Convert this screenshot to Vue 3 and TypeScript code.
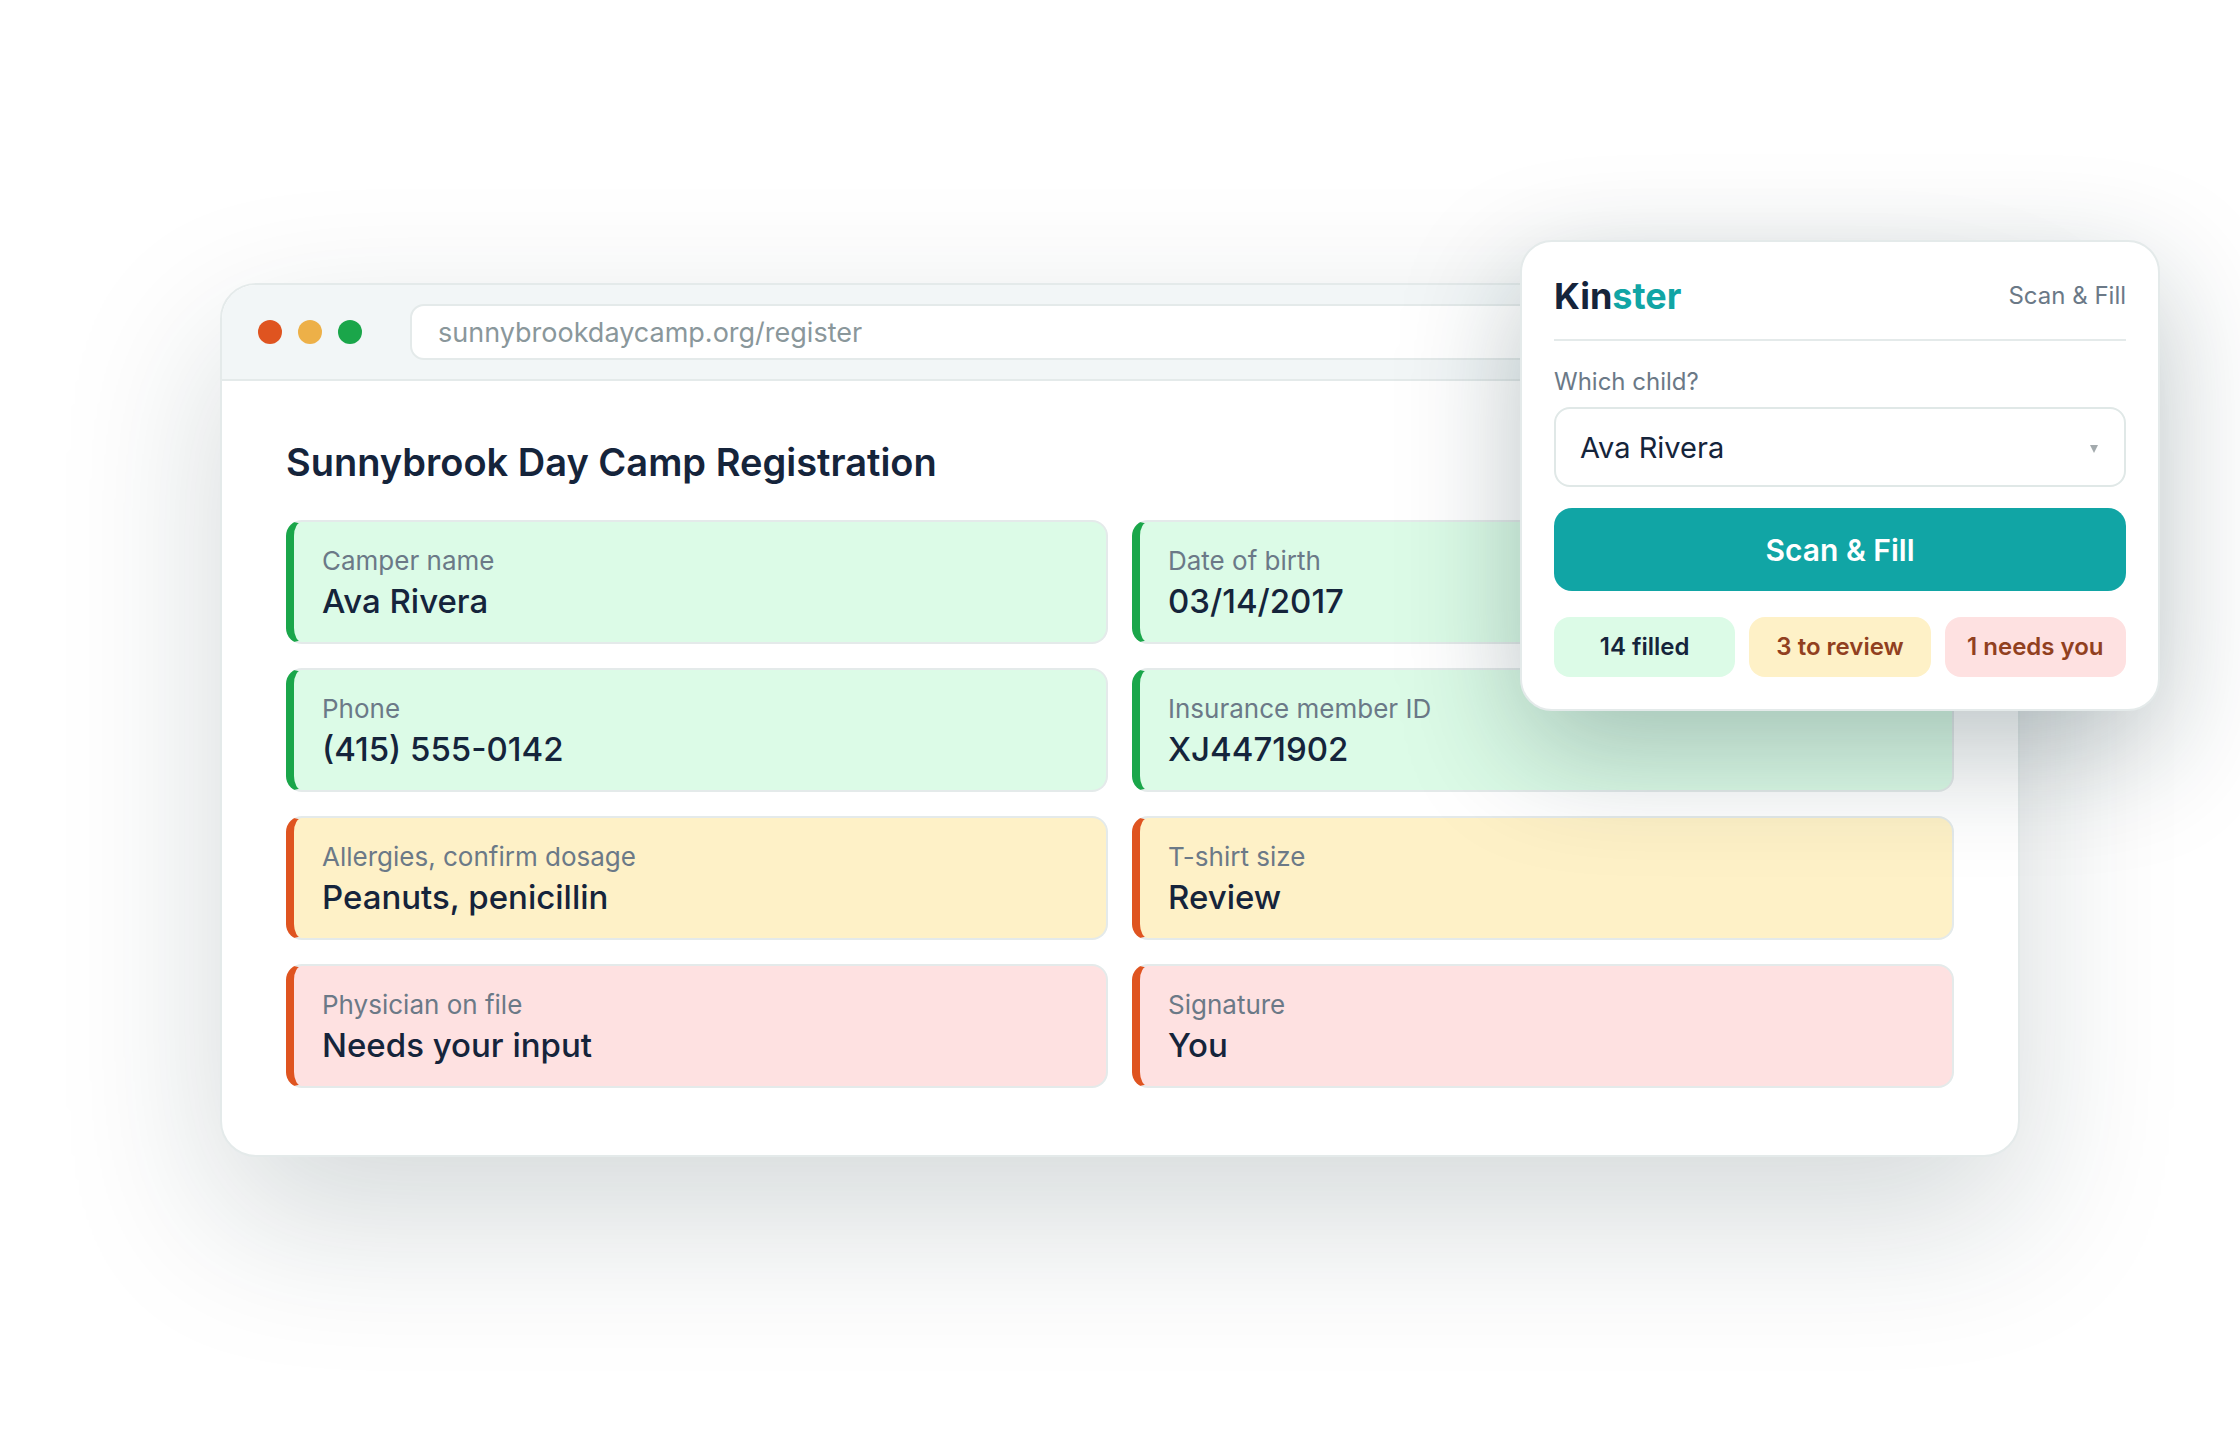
<script setup lang="ts">
import { ref } from 'vue'

type Status = 'filled' | 'review' | 'needed'

interface Field {
  id: string
  label: string
  value: string
  status: Status
}

const url = ref('sunnybrookdaycamp.org/register')
const child = ref('Ava Rivera')
const children: string[] = ['Ava Rivera']

const fields = ref<Field[]>([
  { id: 'camper', label: 'Camper name', value: 'Ava Rivera', status: 'filled' },
  { id: 'dob', label: 'Date of birth', value: '03/14/2017', status: 'filled' },
  { id: 'phone', label: 'Phone', value: '(415) 555-0142', status: 'filled' },
  { id: 'insurance', label: 'Insurance member ID', value: 'XJ4471902', status: 'filled' },
  { id: 'allergies', label: 'Allergies, confirm dosage', value: 'Peanuts, penicillin', status: 'review' },
  { id: 'shirt', label: 'T-shirt size', value: 'Review', status: 'review' },
  { id: 'physician', label: 'Physician on file', value: 'Needs your input', status: 'needed' },
  { id: 'signature', label: 'Signature', value: 'You', status: 'needed' },
])

const totals: { text: string; status: Status }[] = [
  { text: '14 filled', status: 'filled' },
  { text: '3 to review', status: 'review' },
  { text: '1 needs you', status: 'needed' },
]
</script>

<template>
  <main class="stage">
    <div class="scene">
      <section class="window">
        <header class="toolbar">
          <div class="dots">
            <span class="dot dot-close"></span>
            <span class="dot dot-min"></span>
            <span class="dot dot-max"></span>
          </div>
          <input v-model="url" class="address" type="text" aria-label="Address" spellcheck="false" />
        </header>
        <form class="page" @submit.prevent>
          <h1 class="title">Sunnybrook Day Camp Registration</h1>
          <div class="fields">
            <div v-for="field in fields" :key="field.id" class="field" :class="field.status">
              <label class="field-label" :for="field.id">{{ field.label }}</label>
              <input :id="field.id" v-model="field.value" class="field-value" type="text" spellcheck="false" />
            </div>
          </div>
        </form>
      </section>

      <aside class="popup">
        <header class="popup-head">
          <strong class="brand">Kin<span class="brand-accent">ster</span></strong>
          <span class="mode">Scan &amp; Fill</span>
        </header>
        <label class="child-label" for="child">Which child?</label>
        <div class="picker">
          <select id="child" v-model="child" class="child">
            <option v-for="name in children" :key="name">{{ name }}</option>
          </select>
          <svg class="caret" viewBox="0 0 8 8" aria-hidden="true"><path d="M0 0h8L4 8z" /></svg>
        </div>
        <button class="scan" type="button">Scan &amp; Fill</button>
        <div class="totals">
          <span v-for="total in totals" :key="total.text" class="total" :class="total.status">{{ total.text }}</span>
        </div>
      </aside>
    </div>
  </main>
</template>

<style>
body {
  background: #fff;
}
</style>

<style scoped>
.stage,
.stage * {
  box-sizing: border-box;
}

.stage {
  display: flex;
  align-items: center;
  min-height: 100vh;
  padding: 64px 220px;
  overflow: hidden;
  color: #15243b;
  font-family: Inter, 'Liberation Sans', sans-serif;
}

input,
select,
button {
  margin: 0;
  font-family: inherit;
  color: inherit;
}

.scene {
  position: relative;
  flex: 1;
  min-width: 0;
}

.window {
  overflow: hidden;
  background: #fff;
  border: 2px solid #e4eaea;
  border-radius: 36px;
  box-shadow: 0 60px 160px rgba(16, 44, 52, 0.18);
}

.toolbar {
  display: flex;
  align-items: center;
  gap: 48px;
  padding: 19px 36px;
  background: #f2f6f7;
  border-bottom: 2px solid #e4eaea;
}

.dots {
  display: flex;
  gap: 16px;
}

.dot {
  width: 24px;
  height: 24px;
  border-radius: 50%;
}

.dot-close {
  background: #df5420;
}

.dot-min {
  background: #edb048;
}

.dot-max {
  background: #1aa64a;
}

.address {
  flex: 1;
  min-width: 0;
  height: 56px;
  padding: 0 26px;
  background: #fff;
  border: 2px solid #e4eaea;
  border-radius: 14px;
  color: #8a979b;
  font-size: 27px;
}

.page {
  padding: 55px 64px 67px;
}

.title {
  margin: 0 0 32px;
  font-size: 38px;
  font-weight: 600;
  line-height: 52px;
}

.fields {
  display: grid;
  grid-template-columns: 1fr 1fr;
  gap: 24px;
}

.field {
  display: flex;
  flex-direction: column;
  min-width: 0;
  padding: 19px 28px 21px;
  border: 2px solid #e4eaea;
  border-left-width: 8px;
  border-radius: 16px;
}

.field-label {
  color: #6b7987;
  font-size: 26px;
  line-height: 40px;
}

.field-value {
  width: 100%;
  height: 40px;
  padding: 0;
  background: none;
  border: 0;
  font-size: 33px;
  font-weight: 500;
}

.filled {
  background: #dcfbe7;
  border-left-color: #1aa64a;
}

.review {
  background: #fef1c7;
  border-left-color: #df5420;
}

.needed {
  background: #fee1e1;
  border-left-color: #df5420;
}

.popup {
  position: absolute;
  top: -43px;
  right: -140px;
  display: flex;
  flex-direction: column;
  width: 640px;
  padding: 32px;
  background: #fff;
  border: 2px solid #e4eaea;
  border-radius: 32px;
  box-shadow: 0 40px 120px rgba(16, 44, 52, 0.28);
}

.popup-head {
  display: flex;
  align-items: center;
  justify-content: space-between;
  padding-bottom: 21px;
  border-bottom: 2px solid #e4eaea;
}

.brand {
  font-size: 36px;
  font-weight: 700;
  line-height: 44px;
}

.brand-accent {
  color: #11a5a5;
}

.mode,
.child-label {
  color: #6b7987;
  font-size: 24px;
  line-height: 30px;
}

.child-label {
  margin: 26px 0 10px;
}

.picker {
  position: relative;
  display: flex;
}

.child {
  flex: 1;
  height: 80px;
  padding: 0 24px;
  appearance: none;
  background: #fff;
  border: 2px solid #e0e8e7;
  border-radius: 16px;
  font-size: 29px;
}

.caret {
  position: absolute;
  top: 38px;
  right: 28px;
  width: 8px;
  height: 8px;
  fill: #a3aaad;
  pointer-events: none;
}

.scan {
  height: 83px;
  margin: 21px 0 26px;
  background: #11a5a5;
  border: 0;
  border-radius: 18px;
  color: #fff;
  font-size: 30px;
  font-weight: 600;
}

.totals {
  display: grid;
  grid-template-columns: repeat(3, 1fr);
  gap: 14px;
}

.total {
  border-radius: 16px;
  font-size: 24px;
  font-weight: 600;
  line-height: 60px;
  text-align: center;
  white-space: nowrap;
}

.total.review,
.total.needed {
  color: #914020;
}
</style>
